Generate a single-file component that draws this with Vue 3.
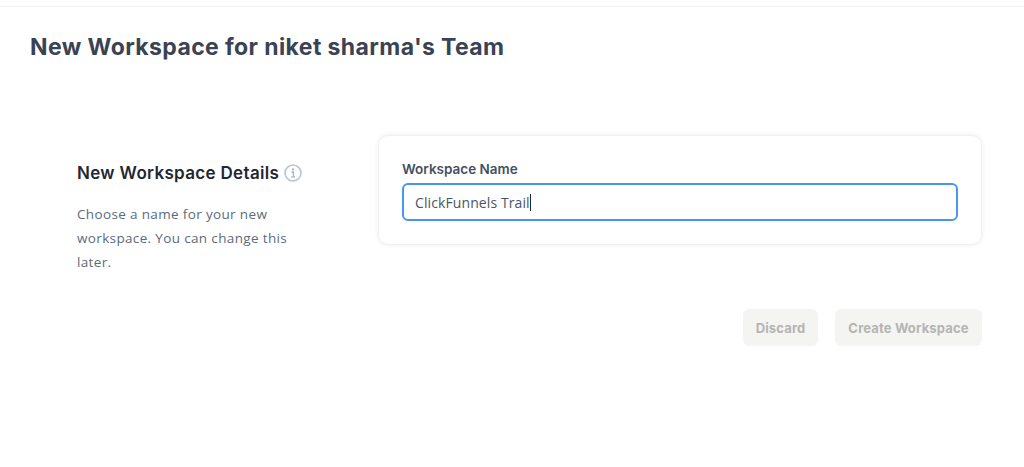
<script setup>
import { ref } from 'vue'

const team = ref("niket sharma's Team")
const workspaceName = ref('ClickFunnels Trail')
</script>

<template>
  <div class="page">
    <div class="top-line"></div>

    <h1 class="page-title">New Workspace for {{ team }}</h1>

    <div class="form-row">
      <div class="details">
        <h2 class="details-title">
          New Workspace Details
          <svg class="info-icon" viewBox="0 0 18 18" width="18" height="18" fill="none">
            <circle cx="9" cy="9" r="8" stroke="#b4c6d8" stroke-width="1.6" />
            <circle cx="9" cy="5.4" r="1.1" fill="#a3b3c4" />
            <path d="M7.4 8h2v4.6M7.2 12.8h3.8" stroke="#a3b3c4" stroke-width="1.3" />
          </svg>
        </h2>
        <p class="details-text">Choose a name for your new workspace. You can change this later.</p>
      </div>

      <div class="card">
        <label class="field-label">Workspace Name</label>
        <div class="field-input">
          <span>{{ workspaceName }}</span><span class="caret"></span>
        </div>
      </div>
    </div>

    <div class="actions">
      <button class="btn btn-discard" disabled>Discard</button>
      <button class="btn btn-create" disabled>Create Workspace</button>
    </div>
  </div>
</template>

<style>
html,
body {
  background: #fff;
  overflow: hidden;
}
</style>

<style scoped>
.page {
  height: 467px;
  padding-top: 6px;
  box-sizing: border-box;
  font-family: Inter, "Open Sans", sans-serif;
  background: #fff;
}

.top-line {
  height: 1px;
  background: #f0f0f5;
}

.page-title {
  margin: 26px 0 0 30px;
  font-size: 23px;
  line-height: 28px;
  font-weight: 700;
  letter-spacing: 0.4px;
  color: #3a4354;
}

.form-row {
  display: flex;
  margin-top: 74px;
  padding-left: 77px;
  padding-right: 42px;
}

.details {
  width: 301px;
  padding-top: 27px;
  box-sizing: border-box;
}

.details-title {
  display: flex;
  align-items: center;
  gap: 5px;
  margin: 0;
  font-size: 17px;
  line-height: 22px;
  font-weight: 600;
  letter-spacing: 0.33px;
  color: #1f2733;
}

.info-icon {
  flex-shrink: 0;
}

.details-text {
  width: 240px;
  margin: 18px 0 0;
  font-family: "Open Sans", sans-serif;
  font-size: 13.5px;
  line-height: 24px;
  letter-spacing: 0.35px;
  color: #5c6b7c;
}

.card {
  flex: 1;
  height: 110px;
  padding: 25px 23px 0;
  box-sizing: border-box;
  background: #fff;
  border: 1px solid #f1f1f1;
  border-radius: 10px;
  box-shadow: 0 0 5px rgba(0, 0, 0, 0.08);
}

.field-label {
  display: block;
  font-size: 13.5px;
  line-height: 16px;
  font-weight: 600;
  color: #454f5f;
}

.field-input {
  display: flex;
  align-items: center;
  height: 38px;
  margin-top: 6px;
  padding-left: 11px;
  box-sizing: border-box;
  border: 2px solid #4a94f5;
  border-radius: 6px;
  font-family: "Open Sans", sans-serif;
  font-size: 14px;
  letter-spacing: 0.1px;
  color: #4a5566;
}

.caret {
  width: 1px;
  height: 17px;
  background: #1f2733;
}

.actions {
  display: flex;
  justify-content: flex-end;
  gap: 17px;
  margin-top: 35px;
  padding-right: 42px;
}

.btn {
  height: 37px;
  padding: 0;
  border: none;
  border-radius: 6px;
  background: #f4f4f2;
  font-family: Inter, sans-serif;
  font-size: 13px;
  font-weight: 700;
  letter-spacing: 0.15px;
  color: #b5b5b2;
}

.btn-discard {
  width: 75px;
}

.btn-create {
  width: 147px;
}
</style>
